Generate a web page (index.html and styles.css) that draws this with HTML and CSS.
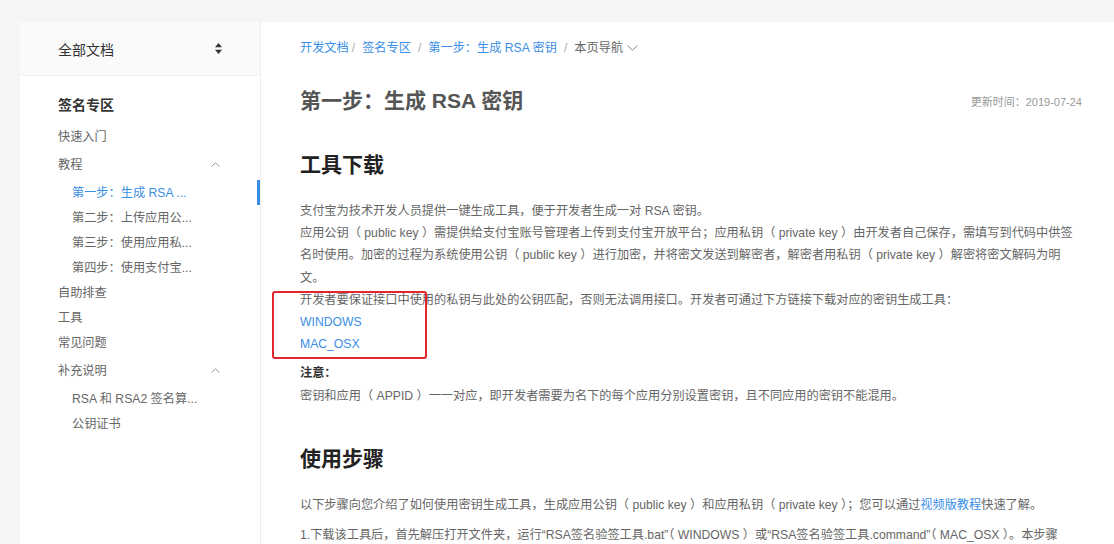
FILE: index.html
```html
<!DOCTYPE html>
<html lang="zh-CN">
<head>
  <meta charset="UTF-8">
  <meta name="viewport" content="width=device-width, initial-scale=1.0">
  <title>第一步：生成 RSA 密钥</title>
  <link rel="stylesheet" href="styles.css">
</head>
<body>
  <div class="page">
    <aside class="sidebar">
      <div class="sidebar-head">
        <span>全部文档</span>
        <svg class="sort-icon" width="7" height="11" viewBox="0 0 7 11">
          <path d="M3.5 0 L7 4.2 L0 4.2 Z" fill="#333"/>
          <path d="M0 6.8 L7 6.8 L3.5 11 Z" fill="#333"/>
        </svg>
      </div>
      <nav class="nav">
        <div class="nav-title">签名专区</div>
        <div class="nav-item">快速入门</div>
        <div class="nav-item group">
          <span>教程</span>
          <svg class="chevron" width="9" height="5" viewBox="0 0 9 5"><polyline points="0.5,4.5 4.5,0.8 8.5,4.5" fill="none" stroke="#999" stroke-width="1"/></svg>
        </div>
        <div class="nav-item child active">第一步：生成 RSA ...</div>
        <div class="nav-item child">第二步：上传应用公...</div>
        <div class="nav-item child">第三步：使用应用私...</div>
        <div class="nav-item child">第四步：使用支付宝...</div>
        <div class="nav-item">自助排查</div>
        <div class="nav-item">工具</div>
        <div class="nav-item">常见问题</div>
        <div class="nav-item group">
          <span>补充说明</span>
          <svg class="chevron" width="9" height="5" viewBox="0 0 9 5"><polyline points="0.5,4.5 4.5,0.8 8.5,4.5" fill="none" stroke="#999" stroke-width="1"/></svg>
        </div>
        <div class="nav-item child">RSA 和 RSA2 签名算...</div>
        <div class="nav-item child">公钥证书</div>
      </nav>
    </aside>

    <main class="content">
      <div class="breadcrumb">
        <a href="#">开发文档</a><span class="sep first">/</span>
        <a href="#">签名专区</a><span class="sep">/</span>
        <a href="#">第一步：生成 RSA 密钥</a><span class="sep">/</span>
        <span class="page-nav">本页导航</span>
        <svg class="down" width="11" height="6" viewBox="0 0 11 6"><polyline points="0.6,0.6 5.5,5.2 10.4,0.6" fill="none" stroke="#888" stroke-width="1"/></svg>
      </div>

      <div class="title-row">
        <h1>第一步：生成 RSA 密钥</h1>
        <span class="updated">更新时间：2019-07-24</span>
      </div>

      <h2>工具下载</h2>
      <p>支付宝为技术开发人员提供一键生成工具，便于开发者生成一对 RSA 密钥。</p>
      <p>应用公钥（ public key ）需提供给支付宝账号管理者上传到支付宝开放平台；应用私钥（ private key ）由开发者自己保存，需填写到代码中供签名时使用。加密的过程为系统使用公钥（ public key ）进行加密，并将密文发送到解密者，解密者用私钥（ private key ）解密将密文解码为明文。</p>
      <div class="download">
        <p>开发者要保证接口中使用的私钥与此处的公钥匹配，否则无法调用接口。开发者可通过下方链接下载对应的密钥生成工具：</p>
        <a class="link" href="#">WINDOWS</a>
        <a class="link" href="#">MAC_OSX</a>
        <span class="mark"></span>
      </div>
      <p class="note">注意：</p>
      <p>密钥和应用（ APPID ）一一对应，即开发者需要为名下的每个应用分别设置密钥，且不同应用的密钥不能混用。</p>

      <h2 class="steps">使用步骤</h2>
      <p class="step">以下步骤向您介绍了如何使用密钥生成工具，生成应用公钥（ public key ）和应用私钥（ private key ）；您可以通过<a href="#">视频版教程</a>快速了解。</p>
      <p class="step">1.下载该工具后，首先解压打开文件夹，运行“RSA签名验签工具.bat”（ WINDOWS ）或“RSA签名验签工具.command”（ MAC_OSX ）。本步骤 WINDOWS 与 MAC_OSX 操作一致。</p>
    </main>
  </div>
</body>
</html>
```

FILE: styles.css
```css
body {
  margin: 0;
  background-color: #f5f5f5;
  font-family: "Liberation Sans", "Noto Sans CJK SC", sans-serif;
  font-size: 12.2px;
  color: #666;
}
a {
  color: #3a8ee6;
  text-decoration: none;
}
.page {
  display: flex;
  padding: 22px 0 0 20px;
  min-height: 100vh;
  box-sizing: border-box;
}

/* sidebar */
.sidebar {
  width: 240px;
  flex-shrink: 0;
  background-color: #fff;
  border-right: 1px solid #eee;
}
.sidebar-head {
  height: 54px;
  box-sizing: border-box;
  display: flex;
  align-items: center;
  justify-content: space-between;
  padding: 0 38px;
  background-color: #fafafa;
  border-bottom: 1px solid #f0f0f0;
  font-size: 14px;
  color: #333;
}
.nav {
  padding: 16px 0;
}
.nav-title {
  padding-left: 38px;
  font-size: 14px;
  font-weight: bold;
  color: #333;
  line-height: 26px;
  margin-bottom: 5.5px;
}
.nav-item {
  display: flex;
  align-items: center;
  justify-content: space-between;
  height: 25px;
  padding: 0 40px 0 38px;
  white-space: nowrap;
}
.nav-item.group {
  height: 31px;
}
.nav-item.child {
  padding-left: 52px;
}
.nav-item.active {
  color: #3a8ee6;
  box-shadow: inset -3px 0 0 #3a8ee6;
}

/* content */
.content {
  flex: 1;
  background-color: #fff;
  padding: 17px 32px 0 39px;
}
.breadcrumb {
  display: flex;
  align-items: center;
  line-height: 18px;
}
.breadcrumb .sep {
  color: #aaa;
  margin: 0 7px;
}
.breadcrumb .sep.first {
  margin-left: 3px;
}
.page-nav {
  color: #666;
}
.breadcrumb .down {
  margin-left: 4px;
}
.title-row {
  display: flex;
  align-items: center;
  justify-content: space-between;
  margin-top: 29px;
  height: 30px;
}
h1 {
  margin: 0;
  font-size: 21px;
  line-height: 30px;
  color: #555;
}
.updated {
  font-size: 11px;
  color: #999;
}
h2 {
  margin: 34px 0 20px;
  font-size: 21px;
  line-height: 30px;
  color: #222;
}
h2.steps {
  margin-top: 37px;
}
p {
  margin: 0;
  line-height: 22.2px;
}
.download {
  position: relative;
}
.link {
  display: block;
  line-height: 22.2px;
}
.mark {
  position: absolute;
  top: 2px;
  left: -28px;
  width: 155px;
  height: 68px;
  box-sizing: border-box;
  border: 2px solid #e3262b;
  border-radius: 3px;
}
.note {
  margin-top: 7px;
  font-weight: bold;
  color: #333;
}
.step {
  margin-bottom: 8px;
}
```
